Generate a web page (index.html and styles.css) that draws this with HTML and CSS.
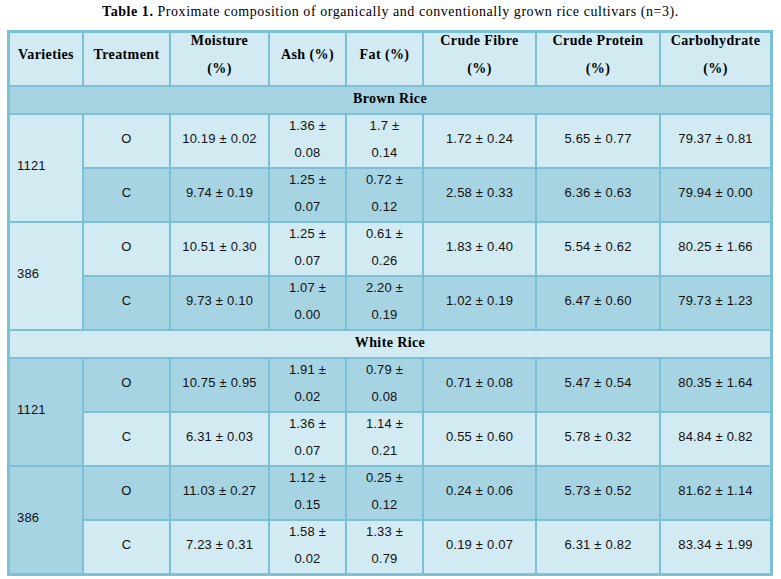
FILE: index.html
```html
<!DOCTYPE html>
<html>
<head>
<meta charset="utf-8">
<link rel="stylesheet" href="styles.css">
</head>
<body>
<div class="page">
  <p class="title"><b>Table 1.</b> Proximate composition of organically and conventionally grown rice cultivars (n=3).</p>
  <table class="tbl">
    <colgroup>
      <col style="width:72px"><col style="width:85px"><col style="width:97px"><col style="width:75px">
      <col style="width:75px"><col style="width:111px"><col style="width:122px"><col style="width:109px">
    </colgroup>
    <thead>
      <tr class="hdr">
        <th><div class="c">Varieties</div></th>
        <th><div class="c">Treatment</div></th>
        <th><div class="c">Moisture<br>(%)</div></th>
        <th><div class="c">Ash (%)</div></th>
        <th><div class="c">Fat (%)</div></th>
        <th><div class="c">Crude Fibre<br>(%)</div></th>
        <th><div class="c">Crude Protein<br>(%)</div></th>
        <th><div class="c">Carbohydrate<br>(%)</div></th>
      </tr>
    </thead>
    <tbody>
      <tr class="grp dark"><td colspan="8">Brown Rice</td></tr>
      <tr class="row light">
        <td rowspan="2" class="var light"><div class="c">1121</div></td>
        <td><div class="c">O</div></td>
        <td><div class="c">10.19 ± 0.02</div></td>
        <td><div class="c">1.36 ±<br>0.08</div></td>
        <td><div class="c">1.7 ±<br>0.14</div></td>
        <td><div class="c">1.72 ± 0.24</div></td>
        <td><div class="c">5.65 ± 0.77</div></td>
        <td><div class="c">79.37 ± 0.81</div></td>
      </tr>
      <tr class="row dark">
        <td><div class="c">C</div></td>
        <td><div class="c">9.74 ± 0.19</div></td>
        <td><div class="c">1.25 ±<br>0.07</div></td>
        <td><div class="c">0.72 ±<br>0.12</div></td>
        <td><div class="c">2.58 ± 0.33</div></td>
        <td><div class="c">6.36 ± 0.63</div></td>
        <td><div class="c">79.94 ± 0.00</div></td>
      </tr>
      <tr class="row light">
        <td rowspan="2" class="var light"><div class="c">386</div></td>
        <td><div class="c">O</div></td>
        <td><div class="c">10.51 ± 0.30</div></td>
        <td><div class="c">1.25 ±<br>0.07</div></td>
        <td><div class="c">0.61 ±<br>0.26</div></td>
        <td><div class="c">1.83 ± 0.40</div></td>
        <td><div class="c">5.54 ± 0.62</div></td>
        <td><div class="c">80.25 ± 1.66</div></td>
      </tr>
      <tr class="row dark">
        <td><div class="c">C</div></td>
        <td><div class="c">9.73 ± 0.10</div></td>
        <td><div class="c">1.07 ±<br>0.00</div></td>
        <td><div class="c">2.20 ±<br>0.19</div></td>
        <td><div class="c">1.02 ± 0.19</div></td>
        <td><div class="c">6.47 ± 0.60</div></td>
        <td><div class="c">79.73 ± 1.23</div></td>
      </tr>
      <tr class="grp light"><td colspan="8">White Rice</td></tr>
      <tr class="row dark">
        <td rowspan="2" class="var dark"><div class="c">1121</div></td>
        <td><div class="c">O</div></td>
        <td><div class="c">10.75 ± 0.95</div></td>
        <td><div class="c">1.91 ±<br>0.02</div></td>
        <td><div class="c">0.79 ±<br>0.08</div></td>
        <td><div class="c">0.71 ± 0.08</div></td>
        <td><div class="c">5.47 ± 0.54</div></td>
        <td><div class="c">80.35 ± 1.64</div></td>
      </tr>
      <tr class="row light">
        <td><div class="c">C</div></td>
        <td><div class="c">6.31 ± 0.03</div></td>
        <td><div class="c">1.36 ±<br>0.07</div></td>
        <td><div class="c">1.14 ±<br>0.21</div></td>
        <td><div class="c">0.55 ± 0.60</div></td>
        <td><div class="c">5.78 ± 0.32</div></td>
        <td><div class="c">84.84 ± 0.82</div></td>
      </tr>
      <tr class="row dark">
        <td rowspan="2" class="var dark"><div class="c">386</div></td>
        <td><div class="c">O</div></td>
        <td><div class="c">11.03 ± 0.27</div></td>
        <td><div class="c">1.12 ±<br>0.15</div></td>
        <td><div class="c">0.25 ±<br>0.12</div></td>
        <td><div class="c">0.24 ± 0.06</div></td>
        <td><div class="c">5.73 ± 0.52</div></td>
        <td><div class="c">81.62 ± 1.14</div></td>
      </tr>
      <tr class="row light">
        <td><div class="c">C</div></td>
        <td><div class="c">7.23 ± 0.31</div></td>
        <td><div class="c">1.58 ±<br>0.02</div></td>
        <td><div class="c">1.33 ±<br>0.79</div></td>
        <td><div class="c">0.19 ± 0.07</div></td>
        <td><div class="c">6.31 ± 0.82</div></td>
        <td><div class="c">83.34 ± 1.99</div></td>
      </tr>
    </tbody>
  </table>
</div>
</body>
</html>
```
FILE: styles.css
```css
html, body {
  margin: 0;
  padding: 0;
  background: #ffffff;
}

.page {
  padding: 0 0 0 7px;
}

.title {
  margin: 0;
  height: 30px;
  line-height: 24px;
  text-align: center;
  font-family: "Liberation Serif", "Times New Roman", serif;
  font-size: 14px;
  letter-spacing: 0.55px;
  color: #000;
  padding-right: 7px;
}

.tbl {
  table-layout: fixed;
  width: 766px;
  border-collapse: separate;
  border-spacing: 2px;
  border: 1px solid #7bc1d5;
  background: #7bc1d5;
}

.tbl th,
.tbl td {
  padding: 0;
  vertical-align: middle;
  text-align: center;
  color: #000;
}

.tbl th {
  height: 52px;
  background: #d2eaf2;
  font-family: "Liberation Serif", "Times New Roman", serif;
  font-weight: bold;
  font-size: 14px;
  letter-spacing: 0.4px;
}

.tbl th .c {
  line-height: 28px;
  margin-top: -8px;
}

.grp td {
  height: 26px;
  font-family: "Liberation Serif", "Times New Roman", serif;
  font-weight: bold;
  font-size: 14px;
  letter-spacing: 0.4px;
  line-height: 20px;
  padding-bottom: 3px;
  box-sizing: border-box;
}

.row td {
  height: 52px;
  font-family: "Liberation Sans", Arial, sans-serif;
  font-size: 13px;
  letter-spacing: 0.2px;
  color: #111;
}

.row td .c {
  line-height: 27px;
  margin-top: -5px;
}

.tbl td.var {
  text-align: left;
  padding-left: 7px;
}

.light,
.light td,
td.light {
  background: #d2eaf2;
}

.dark,
.dark td,
td.dark {
  background: #a6d4e2;
}
```
